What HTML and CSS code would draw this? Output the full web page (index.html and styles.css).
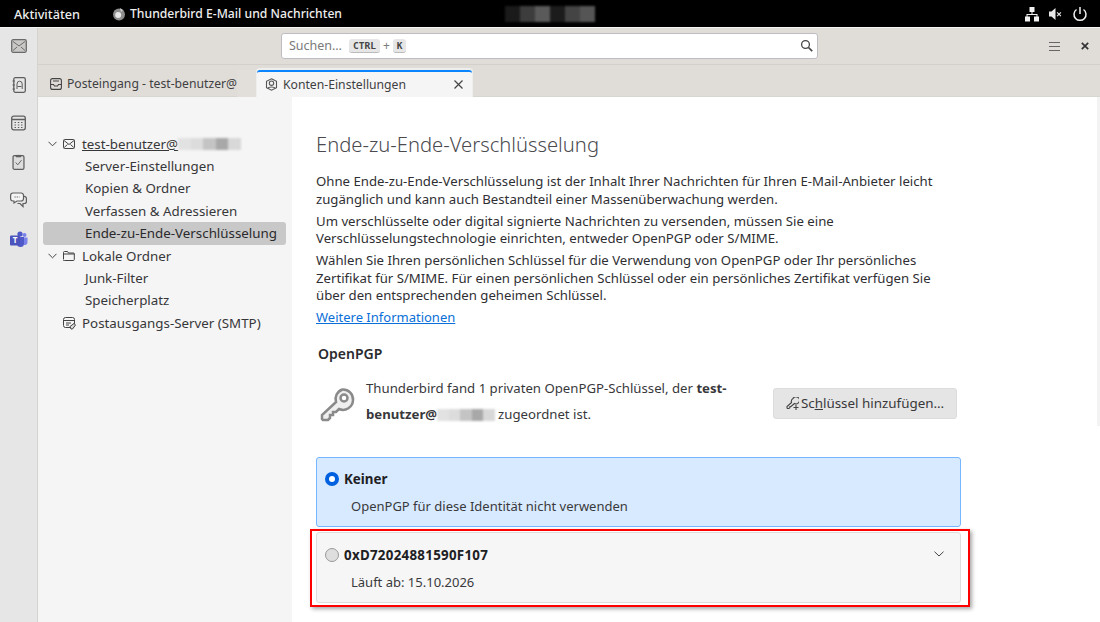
FILE: index.html
```html
<!DOCTYPE html>
<html lang="de">
<head>
<meta charset="utf-8">
<title>Konten-Einstellungen</title>
<link rel="stylesheet" href="styles.css">
</head>
<body>
<header class="topbar">
  <span class="activities">Aktivitäten</span>
  <span class="appmenu"><svg class="birdicon" viewBox="0 0 14 14"><circle cx="7" cy="7.500" r="6" fill="#8d8d8d"/><circle cx="6.200" cy="8" r="3" fill="#e8e8e8"/><path d="M8 1l3 2-2 2z" fill="#cfcfcf"/></svg>Thunderbird E-Mail und Nachrichten</span>
  <span class="clockblur"><i class="c1"></i><i class="c2"></i><i class="c3"></i><i class="c4"></i><i class="c5"></i><i class="c6"></i></span>
  <span class="tray">
    <svg width="16" height="16" viewBox="0 0 16 16" fill="#f2f2f2"><rect x="5.500" y="1" width="5" height="5"/><rect x="1" y="10.500" width="5" height="5"/><rect x="10" y="10.500" width="5" height="5"/><path d="M7.500 6h1v2h5v3h-1V9H3.500v2h-1V8h5z"/></svg>
    <svg width="16" height="16" viewBox="0 0 16 16" fill="#e8e8e8"><path d="M1 5.500h2.500L7.500 2v12l-4-3.500H1z"/><path d="M9.500 6l1.500 1.500L12.500 6l.8.800L11.800 8.300l1.500 1.500-.8.800L11 9.100l-1.500 1.500-.8-.8 1.500-1.500L8.700 6.800z"/></svg>
    <svg width="16" height="16" viewBox="0 0 16 16" fill="none" stroke="#f2f2f2" stroke-width="1.500"><path d="M4.500 3.500a6 6 0 1 0 7 0"/><path d="M8 1v7"/></svg>
  </span>
</header>
<div class="window">
  <nav class="spaces">
    <svg class="sp" width="16" height="14" viewBox="0 0 16 14" fill="#c9c8c6" stroke="#6a6a6a"><rect x=".7" y=".7" width="14.600" height="12.600" rx="1.500" stroke-width="1.300"/><path d="M2 2.500l6 4.500 6-4.500M2 11.500l4-3.500M14 11.500l-4-3.500" fill="none"/></svg>
    <svg class="sp" width="14" height="16" viewBox="0 0 14 16" fill="none" stroke="#5e5e5e"><rect x="1.800" y=".7" width="11.500" height="14.600" rx="1.500" stroke-width="1.300"/><path d="M5 12V7a2.600 2.800 0 0 1 5.200 0v5M5.500 9.500h4M.5 4h2.500M.5 8h2.500M.5 12h2.500"/></svg>
    <svg class="sp" width="15" height="15" viewBox="0 0 15 15" fill="none" stroke="#5e5e5e"><rect x=".7" y=".7" width="13.600" height="13.600" rx="2" stroke-width="1.300"/><path d="M1 4h13" stroke-width="1.500"/><path d="M3.500 7h1.500M6.800 7h1.500M10 7h1.500M3.500 9.500h1.500M6.800 9.500h1.500M10 9.500h1.500M3.500 12h1.500M6.800 12h1.500M10 12h1.500"/></svg>
    <svg class="sp" width="13" height="17" viewBox="0 0 13 17" fill="#ddd" stroke="#5e5e5e"><rect x=".7" y="1.700" width="11.600" height="14.600" rx="1.500" stroke-width="1.300"/><path d="M4 1.500h5v1.500H4z" fill="#5e5e5e"/><path d="M3.500 9l2.200 2.500 4-5" fill="none"/></svg>
    <svg class="sp" width="17" height="16" viewBox="0 0 17 16" fill="#f4f4f4" stroke="#5e5e5e" stroke-width="1.200"><path d="M3 1h8a2.500 2.500 0 0 1 2.500 2.500v3A2.500 2.500 0 0 1 11 9H7l-3 2V9H3A2.500 2.500 0 0 1 .6 6.500v-3A2.500 2.500 0 0 1 3 1z"/><path d="M14 4.500a2 2 0 0 1 2.400 2v3a2 2 0 0 1-2 2H13v3l-3-3H7.500" fill="none"/><path d="M4.500 5h5" stroke-dasharray="1.200 1"/></svg>
    <svg class="sp teams" width="18" height="16" viewBox="0 0 18 16"><circle cx="14.500" cy="4" r="2" fill="#7b83eb"/><circle cx="10" cy="3" r="2.600" fill="#5059c9"/><path d="M12.500 6.500h5v5a2.500 2.500 0 0 1-4 2z" fill="#7b83eb"/><path d="M6 6h8v6.500a3.500 3.500 0 0 1-7 0z" fill="#5059c9"/><rect x="0" y="4.500" width="10" height="10" rx="1" fill="#4b53bc"/><text x="5" y="12.300" class="teamst">T</text></svg>
  </nav>
  <main class="app">
    <div class="toolbar">
      <div class="search">
        <span class="ph">Suchen…</span><kbd>CTRL</kbd><span class="plus">+</span><kbd>K</kbd>
        <svg class="mag" width="13" height="13" viewBox="0 0 13 13" fill="none" stroke="#444" stroke-width="1.300"><circle cx="5.500" cy="5.500" r="3.900"/><path d="M8.500 8.500l3.700 3.700" stroke-width="1.700"/></svg>
      </div>
      <svg class="burger" width="11" height="9" viewBox="0 0 11 9" stroke="#666"><path d="M0 .5h11M0 4.500h11M0 8.500h11"/></svg>
      <svg class="winclose" width="8" height="8" viewBox="0 0 8 8" stroke="#333" stroke-width="1.700"><path d="M.8.800l6.400 6.400M7.200.800L.8 7.200"/></svg>
    </div>
    <div class="tabs">
      <div class="tab inactive">
        <svg width="12" height="12" viewBox="0 0 12 12" fill="none" stroke="#444" stroke-width="1.100"><rect x=".6" y=".6" width="10.800" height="10.800" rx="2"/><path d="M1 6.500h2.500l1 1.500h3l1-1.500H11M3 3h6" /></svg>
        <span class="tabt">Posteingang - test-benutzer@</span><i class="tabfade"></i>
      </div>
      <div class="tab active">
        <svg width="13" height="13" viewBox="0 0 13 13" fill="none" stroke="#555" stroke-width="1.100"><path d="M6.500.8l5 2.500v6.400l-5 2.500-5-2.500V3.300z"/><circle cx="6.500" cy="5.200" r="2.200"/><path d="M3 10.500c.5-2 6.500-2 7 0"/></svg>
        <span class="tabt">Konten-Einstellungen</span>
        <svg class="tabclose" width="9" height="9" viewBox="0 0 9 9" stroke="#444" stroke-width="1.200"><path d="M.5.500l8 8M8.500.500l-8 8"/></svg>
      </div>
    </div>
    <div class="panes">
      <aside class="tree">
        <div class="acct">
          <svg class="chev" width="9" height="6" viewBox="0 0 9 6" fill="none" stroke="#444"><path d="M.5.800l4 4 4-4"/></svg>
          <svg class="ic" width="12" height="10" viewBox="0 0 12 10" fill="none" stroke="#444"><rect x=".5" y=".5" width="11" height="9" rx="1"/><path d="M1 1.500L6 5.500l5-4M1.200 8.500l3.300-3M10.800 8.500l-3.300-3"/></svg>
          <span class="acctname"><u>test-benutzer@</u><span class="blur b1"><i></i><i></i><i></i><i></i><i></i></span></span>
        </div>
        <a class="leaf">Server-Einstellungen</a>
        <a class="leaf">Kopien &amp; Ordner</a>
        <a class="leaf">Verfassen &amp; Adressieren</a>
        <a class="leaf selected">Ende-zu-Ende-Verschlüsselung</a>
        <div class="acct">
          <svg class="chev" width="9" height="6" viewBox="0 0 9 6" fill="none" stroke="#444"><path d="M.5.800l4 4 4-4"/></svg>
          <svg class="ic" width="12" height="10" viewBox="0 0 12 10" fill="none" stroke="#444"><path d="M.5 8V1.500a1 1 0 0 1 1-1h3l1 1.500h5a.8.8 0 0 1 .8.800V8.500a1 1 0 0 1-1 1h-9a.8.8 0 0 1-.8-1.500zM.5 3h11"/></svg>
          <span>Lokale Ordner</span>
        </div>
        <a class="leaf">Junk-Filter</a>
        <a class="leaf">Speicherplatz</a>
        <div class="acct smtp">
          <svg class="ic" width="13" height="13" viewBox="0 0 13 13" fill="none" stroke="#444"><rect x=".5" y=".5" width="11" height="10" rx="2"/><path d="M.5 3.500h11M3 6h5M3 8h3"/><path d="M7 9.500l4-3 1.500 1.500-3 4H8z" fill="#ddd"/></svg>
          <span>Postausgangs-Server (SMTP)</span>
        </div>
      </aside>
      <section class="content">
        <h1>Ende-zu-Ende-Verschlüsselung</h1>
        <p>Ohne Ende-zu-Ende-Verschlüsselung ist der Inhalt Ihrer Nachrichten für Ihren E-Mail-Anbieter leicht zugänglich und kann auch Bestandteil einer Massenüberwachung werden.</p>
        <p>Um verschlüsselte oder digital signierte Nachrichten zu versenden, müssen Sie eine Verschlüsselungstechnologie einrichten, entweder OpenPGP oder S/MIME.</p>
        <p>Wählen Sie Ihren persönlichen Schlüssel für die Verwendung von OpenPGP oder Ihr persönliches Zertifikat für S/MIME. Für einen persönlichen Schlüssel oder ein persönliches Zertifikat verfügen Sie über den entsprechenden geheimen Schlüssel.</p>
        <a class="more">Weitere Informationen</a>
        <h2>OpenPGP</h2>
        <div class="found">
          <svg class="key" width="36" height="36" viewBox="0 0 36 36" fill="none" stroke="#8a8a8a" stroke-width="2.500"><path d="M22.500 2.500a10 10 0 0 1 10.500 10.500 10 10 0 0 1-14 9l-3 3h-3v3h-3v3l-2 2H3l-1-1v-4l14-13a10 10 0 0 1 6.500-12.500z" fill="#efefef"/><circle cx="24" cy="11" r="3.500" fill="#fff"/></svg>
          <div class="foundtext">Thunderbird fand 1 privaten OpenPGP-Schlüssel, der <b>test-</b><br><b>benutzer@</b><span class="blur b2"><i></i><i></i><i></i><i></i><i></i></span> zugeordnet ist.</div>
          <button class="addkey"><svg width="13" height="13" viewBox="0 0 13 13" fill="none" stroke="#444" stroke-width="1.100"><path d="M7 1.500a3.500 3.500 0 1 1 1.500 5L5 9.500l-1 0v1l-1 1H1.500l-.5-.5v-1.500L5.500 5.500A3.500 3.500 0 0 1 7 1.500z"/><path d="M10 8v5M7.500 10.500h5"/></svg><span>Sc<u>h</u>lüssel hinzufügen…</span></button>
        </div>
        <div class="option on">
          <div class="opthead"><i class="radio"></i><b>Keiner</b></div>
          <div class="optsub">OpenPGP für diese Identität nicht verwenden</div>
        </div>
        <div class="option off">
          <div class="opthead"><i class="radio"></i><b class="hex">0xD72024881590F107</b>
            <svg class="optchev" width="10" height="6" viewBox="0 0 10 6" fill="none" stroke="#444"><path d="M.5.700L5 5l4.500-4.300"/></svg>
          </div>
          <div class="optsub">Läuft ab: 15.10.2026</div>
          <div class="redbox"></div>
        </div>
        <i class="scrollthumb"></i>
      </section>
    </div>
  </main>
</div>
</body>
</html>
```
FILE: styles.css
```css
* { box-sizing: border-box; }
html, body { margin: 0; height: 100%; overflow: hidden; }
body { font-family: "Noto Sans", sans-serif; font-size: 13.33px; color: #2b2b2e; background: #fff; width: 1100px; height: 622px; display: flex; flex-direction: column; }
.topbar { height: 27px; background: #000; color: #ededed; display: flex; align-items: center; font-weight: 500; padding: 0 12px 0 14px; position: relative; flex: none; }
.activities { width: 97.500px; font-size: 12.700px; }
.appmenu { display: flex; align-items: center; gap: 4.500px; font-size: 12.200px; }
.birdicon { width: 14px; height: 14px; }
.clockblur { display: flex; position: absolute; left: 505px; top: 6px; height: 16px; filter: blur(1px); }
.clockblur i { display: block; width: 15px; height: 16px; }
.c1 { background: #1a1a1a; } .c2 { background: #3d3d3d; } .c3 { background: #5a5a5a; } .c4 { background: #1c1c1c; } .c5 { background: #444; } .c6 { background: #555; }
.tray { margin-left: auto; display: flex; gap: 8px; align-items: center; }
.window { flex: 1; display: flex; min-height: 0; border-top: 1px solid #f4f4f2; }
.spaces { width: 38px; flex: none; background: #e6e6e6; border-right: 1px solid #d6d4d1; display: flex; flex-direction: column; align-items: center; padding-top: 10px; }
.sp { display: block; height: 16px; margin-bottom: 22.500px; }
.teamst { font: bold 8px "Noto Sans", sans-serif; fill: #fff; text-anchor: middle; }
.app { flex: 1; display: flex; flex-direction: column; min-width: 0; }
.toolbar { height: 37px; background: #e0ddd9; border-bottom: 1px solid #d3d0cc; display: flex; align-items: center; padding-left: 243px; flex: none; }
.search { width: 537px; height: 26px; background: #fff; border: 1px solid #bfbdc4; border-radius: 3px; display: flex; align-items: center; padding-left: 7px; margin-top: -1px; color: #7a7a7a; font-size: 12.500px; }
.ph { margin-right: 7px; }
kbd { font: bold 9.500px "DejaVu Sans Mono", monospace; color: #444; background: #e6e6e6; border-radius: 3px; border-bottom: 1px solid #bbb; padding: 1px 4px; }
.plus { margin: 0 3px; font-size: 12px; }
.mag { margin-left: auto; margin-right: 4px; }
.burger { margin-left: 231px; }
.winclose { margin-left: 21px; }
.tabs { height: 32px; background: #e0ddd9; border-bottom: 1px solid #d8d6d2; display: flex; flex: none; padding: 5px 0 0 9px; }
.tab { display: flex; align-items: center; font-size: 12.200px; color: #3f3f42; height: 27px; }
.inactive { width: 210px; gap: 5px; padding-left: 3px; position: relative; overflow: hidden; }
.tabt { white-space: nowrap; }
.tabfade { position: absolute; right: 0; top: 0; bottom: 0; width: 20px; background: #e2dfdb; }
.active { width: 215px; background: #f5f5f5; border-top: 2px solid #0a84ff; border-radius: 3px 3px 0 0; box-shadow: 0 -1px 0 1px #eeeeec; padding: 0 9px 0 8px; gap: 5px; position: relative; }
.tabclose { margin-left: auto; }
.panes { flex: 1; display: flex; min-height: 0; }
.tree { width: 254px; background: #f5f5f5; padding: 35.700px 6px 0 5px; flex: none; color: #37373a; line-height: 22.400px; }
.acct { display: flex; align-items: center; height: 22.400px; padding-left: 5px; white-space: nowrap; }
.chev { margin-right: 6px; flex: none; }
.ic { margin-right: 7px; flex: none; }
.acctname { display: flex; align-items: center; }
.smtp { padding-left: 20px; }
.smtp .ic { margin-right: 6px; }
.leaf { display: block; padding-left: 42px; height: 22.400px; border-radius: 3px; white-space: nowrap; }
.selected { background: #c8c8c8; color: #2a2a2c; }
.blur { display: inline-flex; height: 12px; filter: blur(1px); vertical-align: middle; }
.blur i { display: block; width: 12.500px; height: 12px; }
.blur i:nth-child(1) { background: #e2e2e2; } .blur i:nth-child(2) { background: #dcdcdc; } .blur i:nth-child(3) { background: #c4c4c4; } .blur i:nth-child(4) { background: #a8a8a8; } .blur i:nth-child(5) { background: #d8d8d8; }
.b2 i { width: 11.500px; }
.content { flex: 1; padding: 34px 0 0 24px; min-width: 0; background: #fff; position: relative; }
h1 { font-size: 20.200px; font-weight: 300; color: #4a4a4f; margin: 0 0 16px; line-height: 26px; }
p { margin: 0 0 4.700px; width: 640px; line-height: 17.500px; font-size: 13.200px; color: #2f2f33; }
.more { display: block; color: #0a6fd8; text-decoration: underline; line-height: 18px; margin-top: -2px; font-size: 13px; }
h2 { font-size: 14px; font-weight: 600; margin: 18px 0 0 2px; line-height: 20px; color: #2b2b2e; }
.found { display: flex; height: 82px; margin-top: 11px; width: 641px; position: relative; }
.key { margin: 12px 10px 0 4px; flex: none; }
.foundtext { width: 372px; line-height: 26px; font-size: 13.200px; color: #38383b; }
.addkey { position: absolute; left: 457px; top: 13px; width: 184px; height: 31px; background: #e5e5e5; border: 1px solid #dcdcdc; border-radius: 3px; display: flex; align-items: center; justify-content: center; gap: 2px; font: 13.400px "Noto Sans", sans-serif; color: #38383b; padding: 0; }
.option { width: 645px; height: 71px; border-radius: 3px; border: 1px solid #74b6ff; background: #d8eaff; padding: 13px 8px 0; position: relative; }
.on { padding-top: 12px; height: 70px; }
.off { background: #f6f6f6; border-color: #dedede; margin-top: 5px; }
.opthead { display: flex; align-items: center; line-height: 19px; font-size: 13.330px; color: #202023; gap: 5px; position: relative; }
.hex { letter-spacing: .28px; }
.radio { width: 14px; height: 14px; border-radius: 50%; display: block; flex: none; }
.on .radio { border: 4px solid #0061e0; background: #fff; }
.off .radio { border: 1px solid #9a9a9a; background: #dedede; }
.optsub { margin: 8px 0 0 26px; line-height: 19px; color: #39393c; font-size: 13px; }
.optchev { position: absolute; right: 8px; top: 5px; }
.redbox { position: absolute; left: -7px; top: -4px; width: 660px; height: 78px; border: 2px solid #f00; box-shadow: 2px 2px 4px rgba(0,0,0,.35); pointer-events: none; }
.scrollthumb { position: absolute; right: 0; top: 0; width: 3px; height: 329px; background: #f3f3f3; }
```
